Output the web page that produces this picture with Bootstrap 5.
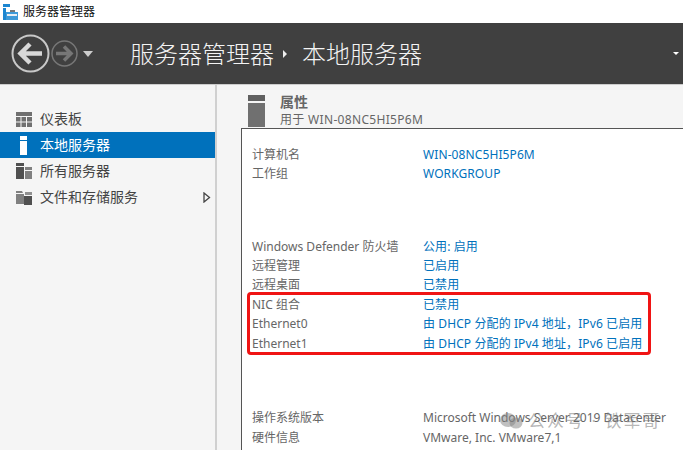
<!DOCTYPE html>
<html lang="zh"><head><meta charset="utf-8"><title>服务器管理器</title>
<link href="https://cdn.jsdelivr.net/npm/bootstrap@5.3.0/dist/css/bootstrap.min.css" rel="stylesheet">
<style>
html,body{height:450px;overflow:hidden}
body{font-family:"Noto Sans","Noto Sans CJK SC",sans-serif;font-size:12px;color:#666;background:#f5f5f5;width:683px;position:relative}
.tb{height:23px;background:#fff;color:#111;font-size:12px;padding-left:3px;gap:5px}
.hd{height:62px;background:#404040;color:#fff;border-bottom:1px solid #ccc}
.navz{width:130px;padding-left:11px;gap:1px}
.crumb{font-size:24px;font-weight:300;color:#f4f4f4;line-height:1}
.crumb .sepz{margin:0 15px 0 9px}
.tri{width:0;height:0;border-style:solid}
.mainz{height:365px}
.side{width:217px;border-right:2px solid #d0d0d0;padding-top:21px;flex:none}
.sitem{height:26px;padding-left:16px;gap:8px;font-size:14px;color:#444}
.sitem.on{background:#0071bc;color:#fff}
.sitem svg{flex:none}
.sitem span{padding-bottom:2px}
.rgt{width:466px;padding-left:24px}
.phead{height:43px;padding-left:7px;gap:15px;padding-top:10px}
.ptxt{margin-top:-2px}
.ptitle{font-weight:700;font-size:14px;line-height:17px;padding-bottom:2px;color:#666}
.psub{font-size:12px;line-height:15px;color:#666;letter-spacing:.32px}
.panel{height:322px;background:#fff;border:1px solid #555;border-right:0;border-bottom:0;padding-top:16px;padding-left:10px}
.prow{height:19.36px;line-height:19px;white-space:nowrap}
.pk{width:171px;flex:none}
.pv{color:#0071bc;letter-spacing:.1px}
.mid{margin-top:53px}
.low{margin-top:55.300px}
.lowv{line-height:19px}
.redbox{position:absolute;left:247px;top:292px;width:404px;height:63px;border:3px solid #f01414;border-radius:4px}
.wm{position:absolute;left:499px;top:408px;color:rgba(120,120,120,.55);font-size:17px;gap:5px;letter-spacing:2px;white-space:nowrap}
</style></head><body>
<div class="tb d-flex align-items-center">
<svg width="15" height="17" viewBox="0 0 15 17"><rect x="0" y="1" width="7" height="3" fill="#1c86d1"/><rect x="0" y="5" width="3" height="12" fill="#1c86d1"/><path d="M3 9h12v8H3z" fill="#3f9ad8"/><rect x="4" y="11" width="10" height="2" fill="#e8eef4"/><rect x="7" y="7" width="5" height="2" fill="#777"/></svg>
<span>服务器管理器</span></div>
<div class="hd d-flex align-items-center">
<div class="navz d-flex align-items-center">
<svg width="39" height="39" viewBox="0 0 39 39"><circle cx="19.5" cy="19.5" r="18" fill="none" stroke="#c8c8c8" stroke-width="2"/><path d="M31 19.5H10M19 10l-9.500 9.500L19 29" fill="none" stroke="#d8d8d8" stroke-width="4.500"/></svg>
<svg width="27" height="27" viewBox="0 0 27 27"><circle cx="13.500" cy="13.500" r="12.500" fill="none" stroke="#777" stroke-width="1.500"/><path d="M5 13.500h15M13 6.500l7 7-7 7" fill="none" stroke="#777" stroke-width="3.500"/></svg>
<span class="tri ms-1" style="border-width:6px 5px 0 5px;border-color:#ccc transparent transparent transparent"></span>
</div>
<div class="crumb d-flex align-items-center"><span>服务器管理器</span><span class="tri sepz" style="border-width:4px 0 4px 4px;border-color:transparent transparent transparent #eee"></span><span>本地服务器</span></div>
<span class="tri ms-auto me-1" style="border-width:3px 3px 0 3px;border-color:#fff transparent transparent transparent"></span>
</div>
<div class="mainz d-flex">
<div class="side">
<div class="sitem d-flex align-items-center"><svg width="16" height="15" viewBox="0 0 16 15"><path d="M0 0h16v4H0zM0 5h4.500v4.500H0zM5.500 5H10v4.500H5.500zM11 5h5v4.500h-5zM0 10.500h4.500V15H0zM5.500 10.500H10V15H5.500zM11 10.500h5V15h-5z" fill="#707070"/></svg><span>仪表板</span></div>
<div class="sitem on d-flex align-items-center"><svg width="16" height="19" viewBox="0 0 16 19"><path d="M4 0h7v4H4zM4 5h7v14H4z" fill="#fff"/></svg><span>本地服务器</span></div>
<div class="sitem d-flex align-items-center"><svg width="16" height="16" viewBox="0 0 16 16"><path d="M0 0h8v3H0zM0 4h8v12H0z" fill="#505050"/><path d="M9 4h7v3H9zM9 8h7v8H9z" fill="#808080"/></svg><span>所有服务器</span></div>
<div class="sitem d-flex align-items-center"><svg width="16" height="15" viewBox="0 0 16 15"><path d="M0 1h6l1 2h-7zM0 4h8v10H0z" fill="#808080"/><path d="M9 2h7v3H9z" fill="#909090"/><path d="M8 6h8v9H8z" fill="#505050"/></svg><span class="flex-grow-1">文件和存储服务</span><svg class="me-1" width="8" height="11" viewBox="0 0 8 11"><path d="M1 1l5.500 4.500L1 10z" fill="#f5f5f5" stroke="#444" stroke-width="1.300"/></svg></div>
</div>
<div class="rgt">
<div class="phead d-flex">
<svg width="17" height="32" viewBox="0 0 17 32"><path d="M0 0h17v6H0z" fill="#606060"/><path d="M0 8h17v24H0z" fill="#707070"/></svg>
<div class="ptxt"><div class="ptitle">属性</div><div class="psub">用于 WIN-08NC5HI5P6M</div></div>
</div>
<div class="panel">
<div class="prow d-flex"><span class="pk">计算机名</span><span class="pv">WIN-08NC5HI5P6M</span></div>
<div class="prow d-flex"><span class="pk">工作组</span><span class="pv">WORKGROUP</span></div>
<div class="mid">
<div class="prow d-flex"><span class="pk">Windows Defender 防火墙</span><span class="pv">公用: 启用</span></div>
<div class="prow d-flex"><span class="pk">远程管理</span><span class="pv">已启用</span></div>
<div class="prow d-flex"><span class="pk">远程桌面</span><span class="pv">已禁用</span></div>
<div class="prow d-flex"><span class="pk">NIC 组合</span><span class="pv">已禁用</span></div>
<div class="prow d-flex"><span class="pk">Ethernet0</span><span class="pv">由 DHCP 分配的 IPv4 地址，IPv6 已启用</span></div>
<div class="prow d-flex"><span class="pk">Ethernet1</span><span class="pv">由 DHCP 分配的 IPv4 地址，IPv6 已启用</span></div>
</div>
<div class="low">
<div class="prow d-flex"><span class="pk">操作系统版本</span><span class="lowv">Microsoft Windows Server 2019 Datacenter</span></div>
<div class="prow d-flex"><span class="pk">硬件信息</span><span class="lowv">VMware, Inc. VMware7,1</span></div>
</div>
</div>
</div>
</div>
<div class="redbox"></div>
<div class="wm d-flex align-items-center">
<svg width="24" height="18" viewBox="0 0 24 18"><ellipse cx="9" cy="8" rx="8" ry="7" fill="rgba(130,130,130,.5)"/><ellipse cx="17" cy="11" rx="6.500" ry="5.500" fill="rgba(130,130,130,.5)"/></svg>
<span>公众号 · 铁军哥</span></div>
<script src="https://cdn.jsdelivr.net/npm/bootstrap@5.3.0/dist/js/bootstrap.bundle.min.js"></script>
</body></html>
